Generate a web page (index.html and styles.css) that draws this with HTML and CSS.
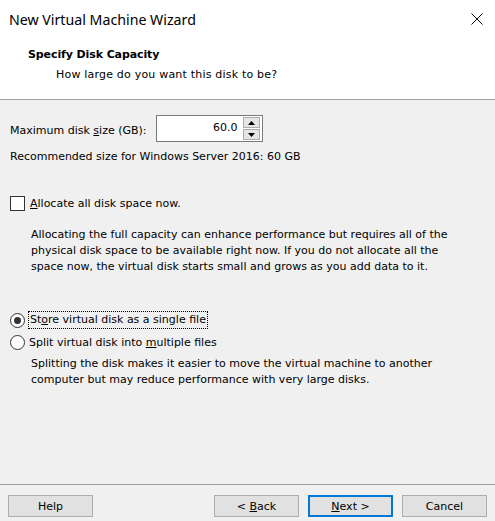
FILE: index.html
```html
<!DOCTYPE html>
<html>
<head>
<meta charset="utf-8">
<link rel="stylesheet" href="styles.css">
</head>
<body>
<div class="window">
  <div class="top">
    <div class="titlebar">
      <span class="title">New Virtual Machine Wizard</span>
      <svg class="close" width="12" height="12" viewBox="0 0 12 12"><path d="M0.5 0.5 L11.5 11.5 M11.5 0.5 L0.5 11.5" stroke="#000" stroke-width="1" fill="none"/></svg>
    </div>
    <div class="header">
      <div class="heading">Specify Disk Capacity</div>
      <div class="subheading">How large do you want this disk to be?</div>
    </div>
  </div>
  <div class="content">
    <div class="size-row">
      <span class="label">Maximum disk <u>s</u>ize (GB):</span>
      <div class="spin">
        <span class="value">60.0</span>
        <div class="spin-btns">
          <div class="spin-btn"><svg width="7" height="4" viewBox="0 0 7 4"><path d="M3.5 0 L7 4 L0 4 Z" fill="#000"/></svg></div>
          <div class="spin-btn"><svg width="7" height="4" viewBox="0 0 7 4"><path d="M0 0 L7 0 L3.5 4 Z" fill="#000"/></svg></div>
        </div>
      </div>
    </div>
    <div class="recommended">Recommended size for Windows Server 2016: 60 GB</div>
    <div class="option check-row">
      <span class="checkbox"></span>
      <span class="opt-label"><u>A</u>llocate all disk space now.</span>
    </div>
    <p class="desc desc-alloc">Allocating the full capacity can enhance performance but requires all of the physical disk space to be available right now. If you do not allocate all the space now, the virtual disk starts small and grows as you add data to it.</p>
    <div class="option radio-row first">
      <span class="radio checked"></span>
      <span class="opt-label focus">St<u>o</u>re virtual disk as a single file</span>
    </div>
    <div class="option radio-row">
      <span class="radio"></span>
      <span class="opt-label">Split virtual disk into <u>m</u>ultiple files</span>
    </div>
    <p class="desc desc-split">Splitting the disk makes it easier to move the virtual machine to another computer but may reduce performance with very large disks.</p>
  </div>
  <div class="footer">
    <button class="btn">Help</button>
    <div class="spacer"></div>
    <button class="btn">&lt; <u>B</u>ack</button>
    <button class="btn default"><u>N</u>ext &gt;</button>
    <button class="btn">Cancel</button>
  </div>
</div>
</body>
</html>
```

FILE: styles.css
```css
html, body {
  margin: 0;
  padding: 0;
}
body {
  width: 495px;
  height: 521px;
  overflow: hidden;
  background: #f0f0f0;
  font-family: "DejaVu Sans", sans-serif;
  font-size: 11px;
  letter-spacing: 0;
  color: #000;
}
.window {
  width: 495px;
  height: 521px;
  display: flex;
  flex-direction: column;
}
.top {
  flex-shrink: 0;
  background: #fff;
  height: 99px;
  border-bottom: 1px solid #a0a0a0;
  box-sizing: content-box;
}
.titlebar {
  height: 38px;
  display: flex;
  align-items: center;
  justify-content: space-between;
  padding: 0 12px 0 9px;
}
.title {
  font-family: "Noto Sans", sans-serif;
  font-size: 14.2px;
  color: #000;
}
.close {
  display: block;
  margin-top: -1px;
}
.header {
  padding-top: 10px;
}
.heading {
  font-weight: bold;
  padding-left: 28px;
  line-height: 13px;
  letter-spacing: -0.1px;
}
.subheading {
  padding-left: 56px;
  margin-top: 7px;
  line-height: 13px;
  letter-spacing: 0.2px;
}
.content {
  flex: 1;
  min-height: 0;
  overflow: hidden;
  padding: 15px 0 0 10px;
}
.size-row {
  display: flex;
  align-items: center;
  height: 27px;
}
.label {
  margin-top: 4px;
  line-height: 13px;
}
.spin {
  margin-left: 9px;
  width: 105px;
  height: 25px;
  background: #fff;
  border: 1px solid #7a7a7a;
  display: flex;
  align-items: center;
}
.value {
  flex: 1;
  text-align: right;
  padding-right: 5px;
  margin-top: -3px;
}
.spin-btns {
  width: 17px;
  height: 23px;
  margin-right: 2px;
  display: flex;
  flex-direction: column;
  gap: 1px;
}
.spin-btn {
  flex: 1;
  background: #e5e5e5;
  border: 1px solid #acacac;
  display: flex;
  align-items: center;
  justify-content: center;
}
.recommended {
  margin-top: 8px;
  line-height: 13px;
}
.option {
  display: flex;
  align-items: center;
}
.check-row {
  margin-top: 33px;
  height: 15px;
}
.checkbox {
  width: 13px;
  height: 13px;
  border: 1px solid #333;
  background: #fff;
  margin-right: 5px;
}
.opt-label {
  line-height: 13px;
}
.desc {
  margin: 0;
  padding-left: 21px;
  line-height: 16px;
  width: 430px;
}
.desc-alloc {
  margin-top: 16px;
}
.radio-row {
  height: 16px;
}
.radio-row.first {
  margin-top: 37px;
}
.radio-row + .radio-row {
  margin-top: 6px;
}
.radio {
  width: 13px;
  height: 13px;
  border: 1px solid #333;
  border-radius: 50%;
  background: #fff;
  margin-right: 4px;
  position: relative;
  box-sizing: content-box;
}
.radio.checked::after {
  content: "";
  position: absolute;
  left: 3px;
  top: 3px;
  width: 7px;
  height: 7px;
  border-radius: 50%;
  background: #333;
}
.focus {
  outline: 1px dotted #000;
  outline-offset: 0;
  padding: 1px 1px 2px 1px;
}
.desc-split {
  margin-top: 6px;
}
.footer {
  flex-shrink: 0;
  height: 26px;
  border-top: 1px solid #a0a0a0;
  display: flex;
  align-items: flex-start;
  padding: 10px 8px 0 8px;
}
.spacer {
  flex: 1;
}
.btn {
  width: 85px;
  height: 22px;
  background: #e1e1e1;
  border: 1px solid #adadad;
  font-family: "DejaVu Sans", sans-serif;
  font-size: 11px;
  color: #000;
  padding: 0;
  margin-left: 9px;
}
.btn:first-child {
  margin-left: 0;
}
.btn.default {
  border: 2px solid #0078d7;
}
```
